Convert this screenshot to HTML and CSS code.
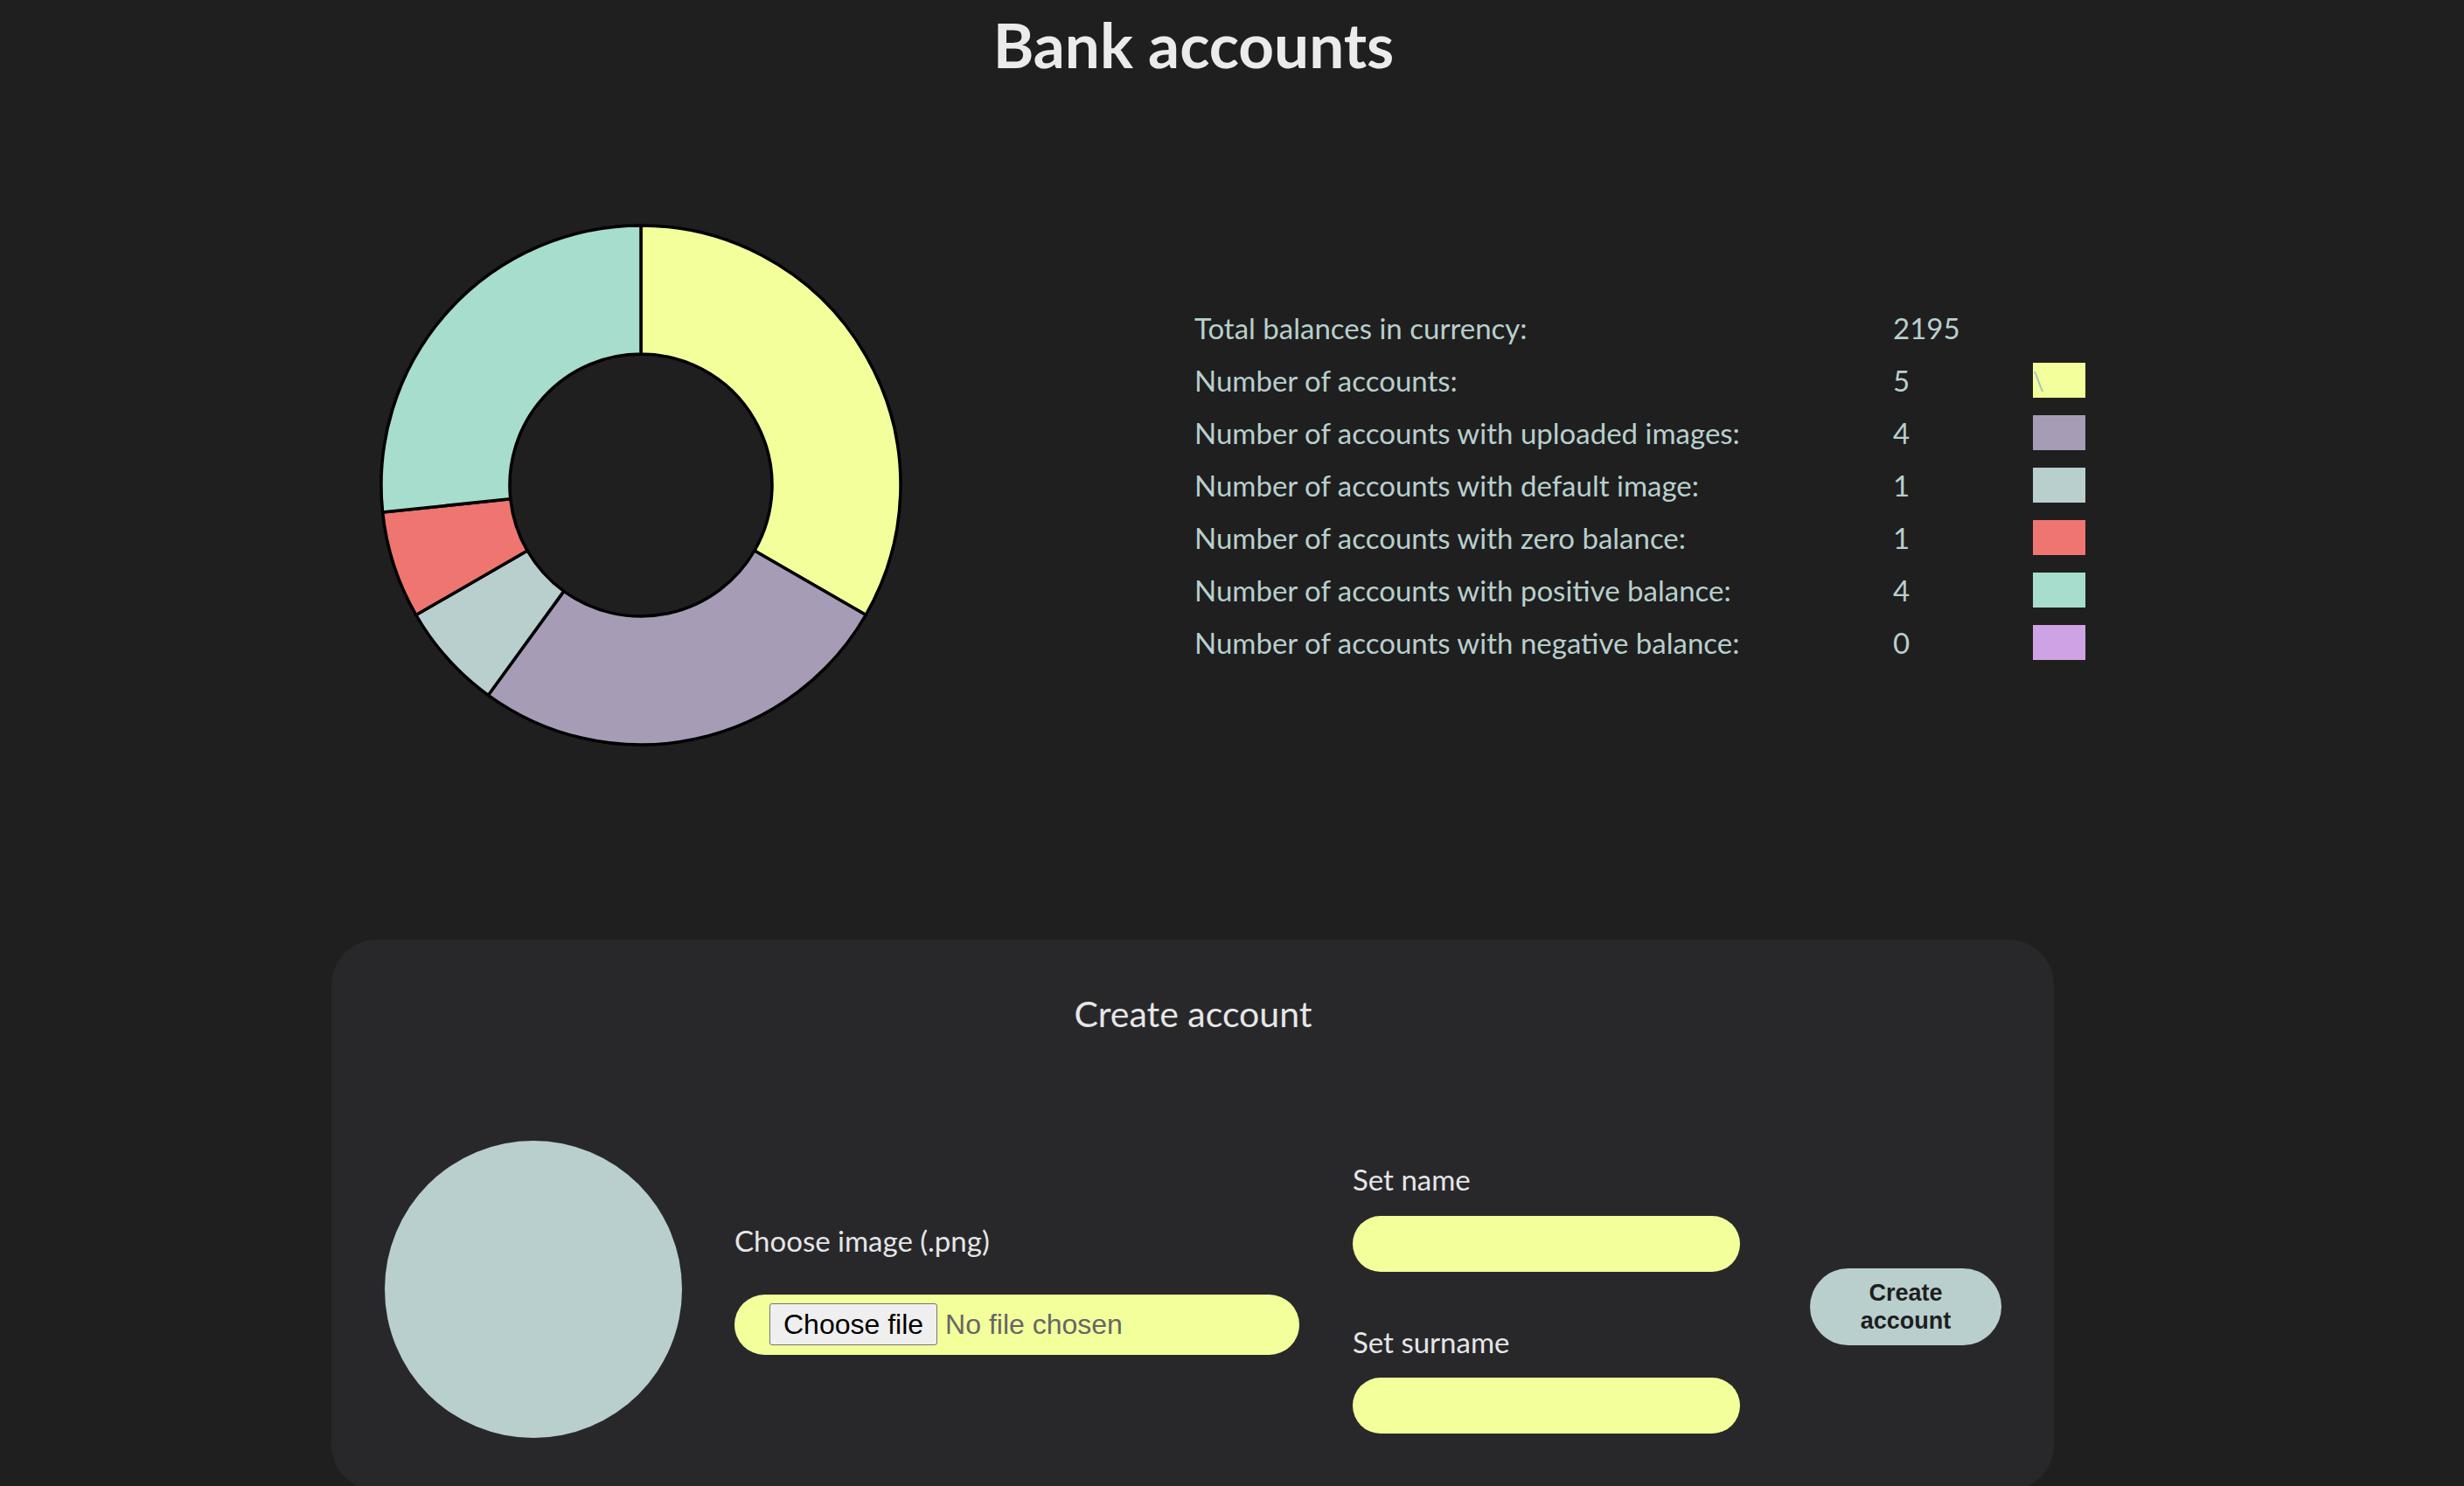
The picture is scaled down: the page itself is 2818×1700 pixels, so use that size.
FILE: index.html
```html
<!DOCTYPE html>
<html lang="en">
<head>
<meta charset="utf-8">
<title>Bank accounts</title>
<link rel="stylesheet" href="styles.css">
</head>
<body>
<div class="page">
  <h1 class="title">Bank accounts</h1>

  <section class="summary">
    <svg class="donut" width="600" height="600" viewBox="0 0 600 600">
      <path fill="#f3ff9b" d="M300,3 A297,297 0 0 1 557.2,448.5 L429.9,375 A150,150 0 0 0 300,150 Z"/>
      <path fill="#a69cb5" d="M557.2,448.5 A297,297 0 0 1 125.4,540.3 L211.8,421.4 A150,150 0 0 0 429.9,375 Z"/>
      <path fill="#b8cfcd" d="M125.4,540.3 A297,297 0 0 1 42.8,448.5 L170.1,375 A150,150 0 0 0 211.8,421.4 Z"/>
      <path fill="#ef7571" d="M42.8,448.5 A297,297 0 0 1 4.6,331 L150.8,315.7 A150,150 0 0 0 170.1,375 Z"/>
      <path fill="#a7ddcd" d="M4.6,331 A297,297 0 0 1 300,3 L300,150 A150,150 0 0 0 150.8,315.7 Z"/>
    </svg>

    <div class="stats">
      <div class="stat-label">Total balances in currency:</div>
      <div class="stat-value">2195</div>
      <div class="stat-swatch-empty"></div>

      <div class="stat-label">Number of accounts:</div>
      <div class="stat-value">5</div>
      <div class="swatch swatch-yellow"><span class="swatch-mark">\</span></div>

      <div class="stat-label">Number of accounts with uploaded images:</div>
      <div class="stat-value">4</div>
      <div class="swatch swatch-purple"></div>

      <div class="stat-label">Number of accounts with default image:</div>
      <div class="stat-value">1</div>
      <div class="swatch swatch-grey"></div>

      <div class="stat-label">Number of accounts with zero balance:</div>
      <div class="stat-value">1</div>
      <div class="swatch swatch-red"></div>

      <div class="stat-label">Number of accounts with positive balance:</div>
      <div class="stat-value">4</div>
      <div class="swatch swatch-teal"></div>

      <div class="stat-label">Number of accounts with negative balance:</div>
      <div class="stat-value">0</div>
      <div class="swatch swatch-lilac"></div>
    </div>
  </section>

  <section class="card">
    <h2 class="card-title">Create account</h2>
    <div class="form-row">
      <div class="avatar"></div>

      <div class="file-col">
        <label class="field-label" for="image">Choose image (.png)</label>
        <label class="file-input">
          <input class="file-native" id="image" type="file" accept=".png">
          <span class="file-btn">Choose file</span>
          <span class="file-status">No file chosen</span>
        </label>
      </div>

      <div class="name-col">
        <label class="field-label" for="name">Set name</label>
        <input class="text-input" id="name" type="text">
        <label class="field-label surname-label" for="surname">Set surname</label>
        <input class="text-input" id="surname" type="text">
      </div>

      <button class="create-btn" type="button">Create account</button>
    </div>
  </section>
</div>
</body>
</html>
```

FILE: styles.css
```css
html, body {
  margin: 0;
  padding: 0;
  background: #1f1f1f;
}

body {
  font-family: "Lato", "Open Sans", sans-serif;
  color: #e6e6e6;
}

.page {
  width: 2730px;
}

.title {
  margin: 10px 0 0;
  text-align: center;
  font-size: 71px;
  font-weight: 700;
  line-height: 1.15;
  color: #ebebeb;
}

.summary {
  display: flex;
  align-items: center;
  margin-top: 163px;
  padding-left: 433px;
}

.donut {
  display: block;
  flex: none;
}

.donut path {
  stroke: #000;
  stroke-width: 3.5;
  stroke-linejoin: round;
}

.stats {
  margin-left: 333px;
  display: grid;
  grid-template-columns: 799px 160px 60px;
  grid-auto-rows: 60px;
  align-items: center;
  font-size: 33px;
  line-height: 60px;
  color: #b8cfcd;
}

.stat-label,
.stat-value {
  white-space: nowrap;
}

.swatch {
  position: relative;
  width: 60px;
  height: 40px;
}

.swatch-yellow { background: #f3ff9b; }
.swatch-purple { background: #a69cb5; }
.swatch-grey { background: #b8cfcd; }
.swatch-red { background: #ef7571; }
.swatch-teal { background: #a7ddcd; }
.swatch-lilac { background: #cfa3e3; }

.swatch-mark {
  position: absolute;
  left: 0;
  top: 6px;
  font-size: 28px;
  line-height: 1;
  color: #a9c3c6;
}

.card {
  margin: 220px 0 0 379px;
  width: 1970px;
  box-sizing: border-box;
  padding: 60px 60px 60px 61px;
  background: #28282b;
  border-radius: 52px;
}

.card-title {
  margin: 0;
  text-align: center;
  font-size: 41px;
  font-weight: 400;
  line-height: 1.2;
  color: #e6e6e6;
}

.form-row {
  display: flex;
  align-items: center;
  margin-top: 121px;
}

.avatar {
  flex: none;
  width: 340px;
  height: 340px;
  border-radius: 50%;
  background: #b8cfcd;
}

.field-label {
  display: block;
  font-size: 33px;
  line-height: 1.2;
  color: #e6e6e6;
}

.file-col {
  margin-left: 60px;
  width: 646px;
  display: flex;
  flex-direction: column;
}

.file-input {
  margin-top: 41px;
  width: 646px;
  height: 69px;
  box-sizing: border-box;
  padding: 0 40px;
  display: flex;
  align-items: center;
  border-radius: 35px;
  background: #f3ff9b;
  font-family: "Liberation Sans", Arial, sans-serif;
  font-size: 32px;
  cursor: pointer;
}

.file-native {
  display: none;
}

.file-btn {
  box-sizing: border-box;
  height: 48px;
  display: flex;
  align-items: center;
  margin-right: 9px;
  padding: 0 15px;
  border: 1px solid #767676;
  border-radius: 3px;
  background: #efefef;
  color: #000;
  white-space: nowrap;
}

.file-status {
  color: #666;
  white-space: nowrap;
}

.name-col {
  margin-left: 61px;
  margin-top: 21px;
  width: 443px;
  display: flex;
  flex-direction: column;
}

.text-input {
  margin-top: 21px;
  width: 443px;
  height: 64px;
  box-sizing: border-box;
  border: none;
  border-radius: 32px;
  background: #f3ff9b;
  padding: 0 24px;
  font-size: 28px;
  outline: none;
}

.surname-label {
  margin-top: 61px;
}

.create-btn {
  margin-left: 80px;
  margin-top: 41px;
  width: 220px;
  height: 88px;
  padding: 0 22px;
  border: none;
  border-radius: 44px;
  background: #b8cfcd;
  color: #1e1e1e;
  font-family: "Liberation Sans", Arial, sans-serif;
  font-weight: 700;
  font-size: 27px;
  line-height: 32px;
}
```
